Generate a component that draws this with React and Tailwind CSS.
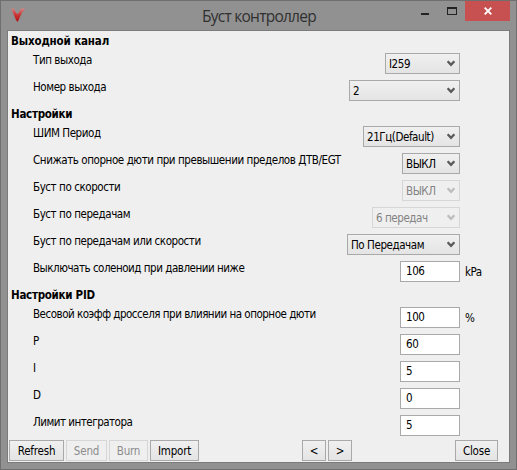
import React from 'react';

const sections = [
    {
        title: 'Выходной канал',
        titleClass: 'tracking-[-0.15px]',
        rows: [
            { label: 'Тип выхода', type: 'select', value: 'I259', width: 'w-[75px]' },
            { label: 'Номер выхода', type: 'select', value: '2', width: 'w-[111px]' },
        ],
    },
    {
        title: 'Настройки',
        rows: [
            { label: 'ШИМ Период', type: 'select', value: '21Гц(Default)', width: 'w-[97px]' },
            { label: 'Снижать опорное дюти при превышении пределов ДТВ/EGT', type: 'select', value: 'ВЫКЛ', width: 'w-[58px]' },
            { label: 'Буст по скорости', type: 'select', value: 'ВЫКЛ', width: 'w-[58px]', disabled: true },
            { label: 'Буст по передачам', type: 'select', value: '6 передач', width: 'w-[88px]', disabled: true },
            { label: 'Буст по передачам или скорости', type: 'select', value: 'По Передачам', width: 'w-[113px]' },
            { label: 'Выключать соленоид при давлении ниже', labelClass: 'tracking-[-0.48px]', type: 'input', value: '106', unit: 'kPa' },
        ],
    },
    {
        title: 'Настройки PID',
        rows: [
            { label: 'Весовой коэфф дросселя при влиянии на опорное дюти', labelClass: 'tracking-[-0.49px]', type: 'input', value: '100', unit: '%' },
            { label: 'P', type: 'input', value: '60' },
            { label: 'I', type: 'input', value: '5' },
            { label: 'D', type: 'input', value: '0' },
            { label: 'Лимит интегратора', labelClass: 'tracking-[-0.5px]', type: 'input', value: '5' },
        ],
    },
];

const Select = ({ value, width, disabled }) => (
    <div className={`flex h-[21px] items-center justify-between border pl-[3px] pr-1 ${width} ${disabled ? 'border-[#d6d6d6] bg-[#efefef] text-[#838383]' : 'border-[#a9a9a9] bg-linear-to-b from-[#f0f0f0] to-[#e4e4e4]'}`}>
        <span className="whitespace-nowrap">{value}</span>
        <svg width="8" height="7" viewBox="0 0 8 7" className="shrink-0">
            <path d="M0.6 1.2L4 4.9L7.4 1.2" fill="none" stroke={disabled ? '#bdbdbd' : '#5a5a5a'} strokeWidth="2.3" />
        </svg>
    </div>
);

const Row = ({ row }) => (
    <div className="flex h-[27px] items-start">
        <span className={`flex-1 pl-[25px] leading-[14px] whitespace-nowrap ${row.labelClass || ''}`}>{row.label}</span>
        {row.type === 'select' ? (
            <Select value={row.value} width={row.width} disabled={row.disabled} />
        ) : (
            <input className="h-[21px] w-[60px] border border-[#a9a9a9] bg-white pl-[5px] pb-px outline-none" defaultValue={row.value} />
        )}
        <span className="w-[49px] pl-[5px] leading-[22px]">{row.unit}</span>
    </div>
);

const Button = ({ children, className, disabled }) => (
    <button
        type="button"
        disabled={disabled}
        className={`flex h-[21px] items-center justify-center border tracking-[-0.2px] ${className} ${disabled ? 'border-[#d6d6d6] bg-[#efefef] text-[#8c8c8c]' : 'border-[#a9a9a9] bg-linear-to-b from-[#f0f0f0] to-[#e4e4e4]'}`}
    >
        {children}
    </button>
);

const TitleBar = () => (
    <div className="flex h-[29px] items-start">
        <svg width="14" height="14" viewBox="0 0 14 14" className="mt-[7px] ml-[4px]">
            <defs>
                <linearGradient id="logo" x1="0" y1="0" x2="0" y2="1">
                    <stop offset="0" stopColor="#d48c8c" />
                    <stop offset="0.45" stopColor="#cc3a3a" />
                    <stop offset="1" stopColor="#b00c10" />
                </linearGradient>
            </defs>
            <path d="M0 0.8L3.2 0.4L4.6 3.8L6.3 6.2L8.2 4L9.8 0.8L14 0L12.8 2.6L11 4.6L6.7 14L5 12L1.8 4.5Z" fill="url(#logo)" />
        </svg>
        <h1 className="flex-1 pl-[177px] font-['Open_Sans','Noto_Sans',sans-serif] text-[15.5px] leading-[30px] tracking-[-0.75px] text-[#303030] whitespace-nowrap">
            Буст контроллер
        </h1>
        <svg width="37" height="20" viewBox="0 0 37 20" className="mr-[7px]" shapeRendering="crispEdges">
            <rect x="0" y="12" width="8" height="2" fill="#222" />
            <path d="M26 6H36V14H26Z M27 8V13H35V8Z" fill="#222" fillRule="evenodd" />
        </svg>
        <div className="flex h-5 w-[45px] items-center justify-center bg-[#c75050]">
            <svg width="8" height="8" viewBox="0 0 8 8">
                <path d="M0.7 0.7L7.3 7.3M7.3 0.7L0.7 7.3" stroke="#fff" strokeWidth="1.9" />
            </svg>
        </div>
    </div>
);

const App = () => {
    return (
        <div className="flex h-[470px] w-[517px] flex-col border border-[#6f6f6f] bg-[#919191] px-1.5 font-['DejaVu_Sans_Condensed','DejaVu_Sans',sans-serif] text-[11.5px] leading-[14px] tracking-[-0.43px] text-black">
            <TitleBar />
            <div className="flex h-[433px] w-[503px] flex-col border border-[#7b7b7b] bg-[#efefef] pt-[3px]">
                {sections.map((section) => (
                    <div key={section.title}>
                        <h2 className={`h-[19px] pl-[3px] font-bold ${section.titleClass || 'tracking-[-0.28px]'}`}>{section.title}</h2>
                        {section.rows.map((row) => (
                            <Row key={row.label} row={row} />
                        ))}
                    </div>
                ))}
                <div className="mt-[-2px] flex gap-0.5 pl-px">
                    <Button className="w-[55px]">Refresh</Button>
                    <Button className="w-[41px]" disabled>Send</Button>
                    <Button className="w-[39px]" disabled>Burn</Button>
                    <Button className="w-[49px]">Import</Button>
                    <Button className="ml-[101px] w-6">&lt;</Button>
                    <Button className="w-6">&gt;</Button>
                    <Button className="ml-[101px] w-[43px]">Close</Button>
                </div>
            </div>
        </div>
    );
};

export default App;
